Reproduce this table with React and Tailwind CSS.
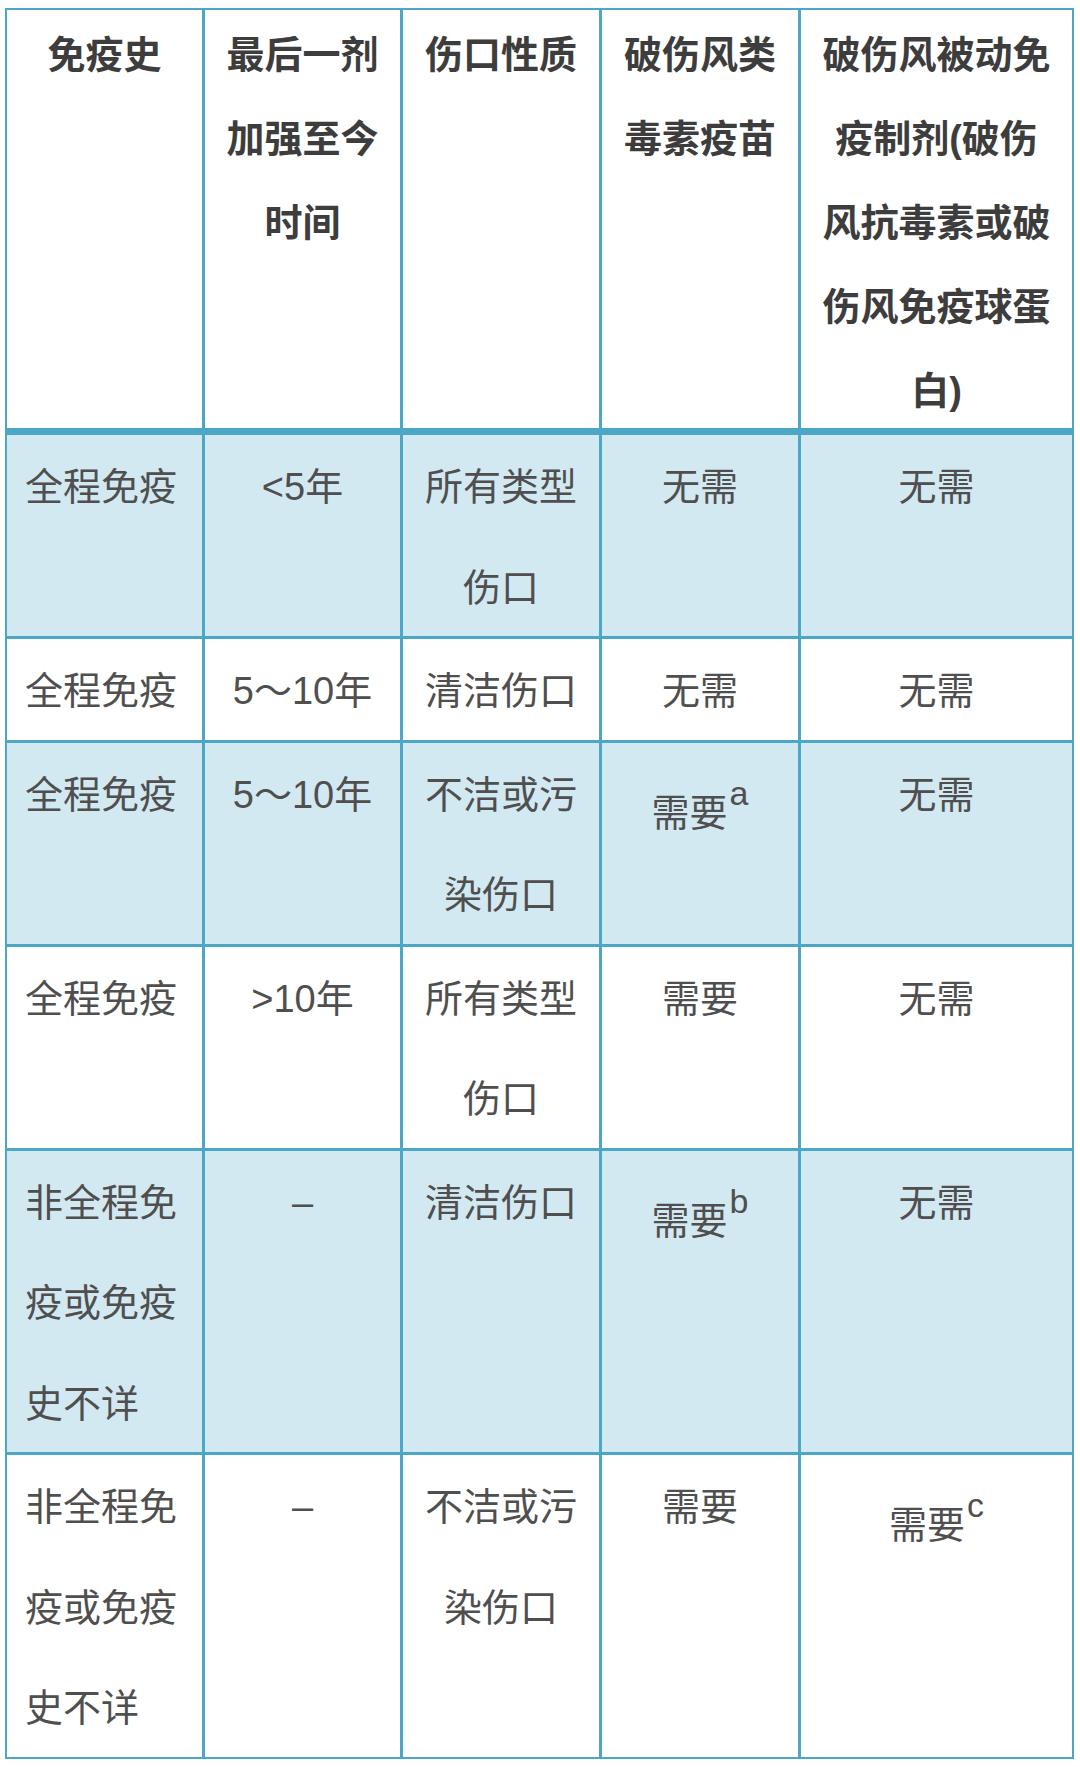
import React from "react";

const FONT = "font-['Liberation_Sans','Noto_Sans_CJK_SC',sans-serif]";

const header = [
  ["免疫史"],
  ["最后一剂", "加强至今", "时间"],
  ["伤口性质"],
  ["破伤风类", "毒素疫苗"],
  ["破伤风被动免", "疫制剂(破伤", "风抗毒素或破", "伤风免疫球蛋", "白)"],
];

const sup = (text, mark) => ({ sup: true, text, mark });

const rows = [
  { blue: true, cells: [["全程免疫"], ["<5年"], ["所有类型", "伤口"], ["无需"], ["无需"]] },
  { blue: false, cells: [["全程免疫"], ["5～10年"], ["清洁伤口"], ["无需"], ["无需"]] },
  { blue: true, cells: [["全程免疫"], ["5～10年"], ["不洁或污", "染伤口"], sup("需要", "a"), ["无需"]] },
  { blue: false, cells: [["全程免疫"], [">10年"], ["所有类型", "伤口"], ["需要"], ["无需"]] },
  { blue: true, cells: [["非全程免", "疫或免疫", "史不详"], ["–"], ["清洁伤口"], sup("需要", "b"), ["无需"]] },
  { blue: false, cells: [["非全程免", "疫或免疫", "史不详"], ["–"], ["不洁或污", "染伤口"], ["需要"], sup("需要", "c")] },
];

function Cell({ content, blue, first }) {
  const bg = blue ? "bg-[#d3e9f2]" : "bg-white";
  const align = first ? "text-left pl-[18px]" : "text-center";
  if (content.sup) {
    return (
      <div className={`${bg} ${align} leading-[100.5px]`}>
        <span className="relative top-[20px]">
          {content.text}
          <span className="relative top-[-21px] text-[34px] ml-[2px]">{content.mark}</span>
        </span>
      </div>
    );
  }
  return (
    <div className={`${bg} ${align} leading-[100.5px]`}>
      <div className="translate-y-[2px]">
        {content.map((l, i) => (
          <div key={i}>{l}</div>
        ))}
      </div>
    </div>
  );
}

export default function App() {
  return (
    <div className={`w-[1080px] min-h-[1767px] bg-white pt-[8px] pl-[5px] ${FONT}`}>
      <div className="w-[1069px] bg-[#4ba7c5] p-[2px] flex flex-col gap-[3px]">
        <div className="grid grid-cols-[195px_195px_196px_196px_271px] gap-x-[3px] mb-[4px]">
          {header.map((lines, i) => (
            <div
              key={i}
              className="bg-white h-[418px] pt-[3px] text-center text-[38px] leading-[84px] font-bold text-[#3d3d3d]"
            >
              {lines.map((l, j) => (
                <div key={j}>{l}</div>
              ))}
            </div>
          ))}
        </div>
        {rows.map((r, i) => (
          <div
            key={i}
            className="grid grid-cols-[195px_195px_196px_196px_271px] gap-x-[3px] text-[38px] text-[#4f4f4f]"
          >
            {r.cells.map((c, j) => (
              <Cell key={j} content={c} blue={r.blue} first={j === 0} />
            ))}
          </div>
        ))}
      </div>
    </div>
  );
}
